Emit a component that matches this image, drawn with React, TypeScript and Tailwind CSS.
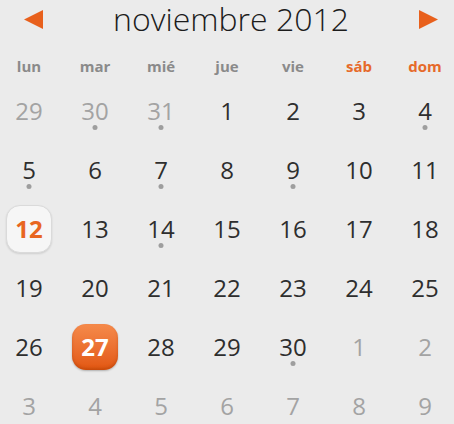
type Day = { n: number; muted?: boolean; dot?: boolean; today?: boolean; selected?: boolean };

const weeks: Day[][] = [
  [{ n: 29, muted: true }, { n: 30, muted: true, dot: true }, { n: 31, muted: true, dot: true }, { n: 1 }, { n: 2 }, { n: 3 }, { n: 4, dot: true }],
  [{ n: 5, dot: true }, { n: 6 }, { n: 7, dot: true }, { n: 8 }, { n: 9, dot: true }, { n: 10 }, { n: 11 }],
  [{ n: 12, today: true }, { n: 13 }, { n: 14, dot: true }, { n: 15 }, { n: 16 }, { n: 17 }, { n: 18 }],
  [{ n: 19 }, { n: 20 }, { n: 21 }, { n: 22 }, { n: 23 }, { n: 24 }, { n: 25 }],
  [{ n: 26 }, { n: 27, selected: true }, { n: 28 }, { n: 29 }, { n: 30, dot: true }, { n: 1, muted: true }, { n: 2, muted: true }],
  [{ n: 3, muted: true }, { n: 4, muted: true }, { n: 5, muted: true }, { n: 6, muted: true }, { n: 7, muted: true }, { n: 8, muted: true }, { n: 9, muted: true }],
];

const dayNames = ['lun', 'mar', 'mié', 'jue', 'vie', 'sáb', 'dom'];

function Cell({ d }: { d: Day }) {
  if (d.selected) {
    return (
      <div className="flex h-[59px] items-center justify-center">
        <div className="flex h-[46px] w-[46px] items-center justify-center rounded-[14px] bg-gradient-to-b from-[#f58a4a] to-[#e2570f] shadow-[inset_0_-2px_3px_rgba(150,50,0,0.35),0_1px_2px_rgba(0,0,0,0.25)]">
          <span className="text-[24px] font-bold text-white">{d.n}</span>
        </div>
      </div>
    );
  }
  if (d.today) {
    return (
      <div className="flex h-[59px] items-center justify-center">
        <div className="flex h-[48px] w-[46px] items-center justify-center rounded-[14px] border border-[#dadada] bg-[#f6f6f6] shadow-[0_1px_2px_rgba(0,0,0,0.12)]">
          <span className="text-[24px] font-bold text-[#e8661f]">{d.n}</span>
        </div>
      </div>
    );
  }
  return (
    <div className="relative flex h-[59px] items-center justify-center">
      <span className={`text-[24px] leading-none ${d.muted ? 'text-[#a3a3a3]' : 'text-[#2e2e2e]'}`}>{d.n}</span>
      {d.dot && <span className="absolute left-1/2 top-[44px] h-[5px] w-[5px] -translate-x-1/2 rounded-full bg-[#9e9e9e]"></span>}
    </div>
  );
}

export default function App() {
  return (
    <div className="h-[424px] w-[454px] overflow-hidden bg-[#ebebeb] font-['Open_Sans',sans-serif]">
      {/* Header */}
      <div className="flex h-[38px] items-center justify-between pl-[24px] pr-[16px]">
        <svg width="19" height="19" viewBox="0 0 19 19">
          <polygon points="0,9.5 19,0 19,19" fill="#e8601c" />
        </svg>
        <h1 className="text-[32px] leading-[38px] font-light text-[#1c1c1c]">noviembre 2012</h1>
        <svg width="19" height="19" viewBox="0 0 19 19">
          <polygon points="0,0 19,9.5 0,19" fill="#e8601c" />
        </svg>
      </div>

      <div className="ml-[-4px] w-[462px]">
        {/* Day names */}
        <div className="grid h-[56px] grid-cols-7 items-center">
          {dayNames.map((n, i) => (
            <div key={n} className={`text-center text-[15px] font-bold ${i >= 5 ? 'text-[#e66a2a]' : 'text-[#8a8a8a]'}`}>
              {n}
            </div>
          ))}
        </div>

        {/* Days */}
        <div className="mt-[-13px] grid grid-cols-7">
          {weeks.flat().map((d, i) => (
            <Cell key={i} d={d} />
          ))}
        </div>
      </div>
    </div>
  );
}
